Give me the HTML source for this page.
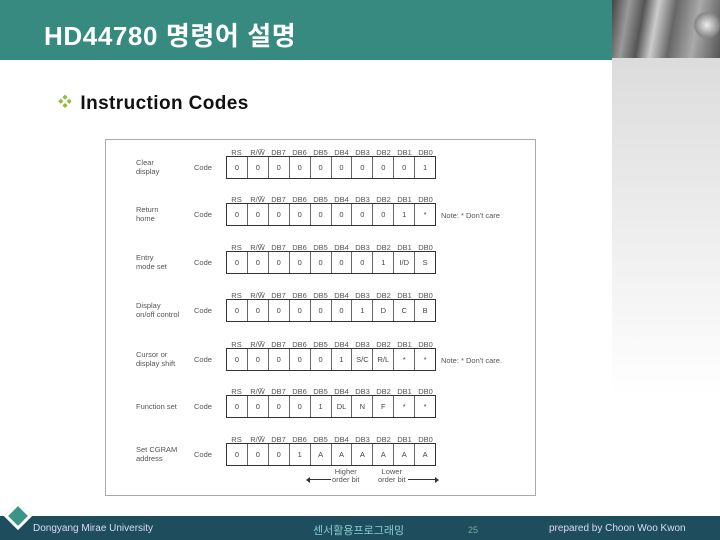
<!DOCTYPE html>
<html><head><meta charset="utf-8"><style>
*{margin:0;padding:0;box-sizing:border-box}
body{width:720px;height:540px;position:relative;overflow:hidden;background:#fff;font-family:"Liberation Sans","Noto Sans CJK KR",sans-serif}
.hdr{position:absolute;left:0;top:0;width:612px;height:60px;background:#368a80}
.hdr h1{position:absolute;left:44px;top:16px;color:#fff;font-size:26px;font-weight:bold;letter-spacing:0.6px}
.img{position:absolute;left:612px;top:0;width:108px;height:58px;background:radial-gradient(circle at 95px 25px,#eee 0,#888 12px,transparent 14px),linear-gradient(100deg,#444 0,#999 15%,#555 28%,#ccc 40%,#666 55%,#aaa 75%,#555 100%)}
.panel{position:absolute;left:612px;top:58px;width:108px;height:340px;background:linear-gradient(#dcdcdc,#fff)}
.sub{position:absolute;left:58px;top:93px;font-size:19px;font-weight:bold;color:#111;letter-spacing:0.4px}
.sub b{color:#8bbf3a;font-size:14px;margin-right:8px;position:relative;top:-2px}
.fig{position:absolute;left:105px;top:139px;width:431px;height:357px;border:1px solid #aaa;background:#fff}
.row{position:absolute;left:0;width:100%;font-size:7.5px;color:#555}
.h{position:absolute;left:120px;top:0;width:210px;display:flex}
.h span{flex:1;text-align:center}
.box{position:absolute;left:120px;top:8px;width:210px;height:23px;border:1px solid #333;display:flex}
.box span{flex:1;text-align:center;line-height:21px;border-left:1px solid #666;font-size:7.5px;color:#444}
.box span:first-child{border-left:none}
.lab{position:absolute;left:30px;top:10px;line-height:9px}
.code{position:absolute;left:88px;top:15px}
.note{position:absolute;left:335px;top:16px}
.ft{position:absolute;left:0;top:516px;width:720px;height:24px;background:#1e4d5e;color:#dde;font-size:10px}
.ft span{position:absolute;top:7px}
.dia{position:absolute;left:8px;top:506px;width:20px;height:20px;transform:rotate(45deg);background:#3a9588;border:3px solid #fff}
</style></head><body>
<div class="hdr"><h1>HD44780 명령어 설명</h1></div>
<div class="img"></div>
<div class="panel"></div>
<div class="sub"><b>❖</b>Instruction Codes</div>
<div class="fig">
<div class="row" style="top:8px"><div class="h"><span>RS</span><span>R/W̅</span><span>DB7</span><span>DB6</span><span>DB5</span><span>DB4</span><span>DB3</span><span>DB2</span><span>DB1</span><span>DB0</span></div><div class="lab">Clear<br>display</div><div class="code">Code</div><div class="box"><span>0</span><span>0</span><span>0</span><span>0</span><span>0</span><span>0</span><span>0</span><span>0</span><span>0</span><span>1</span></div></div>
<div class="row" style="top:55px"><div class="h"><span>RS</span><span>R/W̅</span><span>DB7</span><span>DB6</span><span>DB5</span><span>DB4</span><span>DB3</span><span>DB2</span><span>DB1</span><span>DB0</span></div><div class="lab">Return<br>home</div><div class="code">Code</div><div class="box"><span>0</span><span>0</span><span>0</span><span>0</span><span>0</span><span>0</span><span>0</span><span>0</span><span>1</span><span>*</span></div><div class="note">Note: * Don't care</div></div>
<div class="row" style="top:103px"><div class="h"><span>RS</span><span>R/W̅</span><span>DB7</span><span>DB6</span><span>DB5</span><span>DB4</span><span>DB3</span><span>DB2</span><span>DB1</span><span>DB0</span></div><div class="lab">Entry<br>mode set</div><div class="code">Code</div><div class="box"><span>0</span><span>0</span><span>0</span><span>0</span><span>0</span><span>0</span><span>0</span><span>1</span><span>I/D</span><span>S</span></div></div>
<div class="row" style="top:151px"><div class="h"><span>RS</span><span>R/W̅</span><span>DB7</span><span>DB6</span><span>DB5</span><span>DB4</span><span>DB3</span><span>DB2</span><span>DB1</span><span>DB0</span></div><div class="lab">Display<br>on/off control</div><div class="code">Code</div><div class="box"><span>0</span><span>0</span><span>0</span><span>0</span><span>0</span><span>0</span><span>1</span><span>D</span><span>C</span><span>B</span></div></div>
<div class="row" style="top:200px"><div class="h"><span>RS</span><span>R/W̅</span><span>DB7</span><span>DB6</span><span>DB5</span><span>DB4</span><span>DB3</span><span>DB2</span><span>DB1</span><span>DB0</span></div><div class="lab">Cursor or<br>display shift</div><div class="code">Code</div><div class="box"><span>0</span><span>0</span><span>0</span><span>0</span><span>0</span><span>1</span><span>S/C</span><span>R/L</span><span>*</span><span>*</span></div><div class="note">Note: * Don't care.</div></div>
<div class="row" style="top:247px"><div class="h"><span>RS</span><span>R/W̅</span><span>DB7</span><span>DB6</span><span>DB5</span><span>DB4</span><span>DB3</span><span>DB2</span><span>DB1</span><span>DB0</span></div><div class="lab" style="top:15px">Function set</div><div class="code">Code</div><div class="box"><span>0</span><span>0</span><span>0</span><span>0</span><span>1</span><span>DL</span><span>N</span><span>F</span><span>*</span><span>*</span></div></div>
<div class="row" style="top:295px"><div class="h"><span>RS</span><span>R/W̅</span><span>DB7</span><span>DB6</span><span>DB5</span><span>DB4</span><span>DB3</span><span>DB2</span><span>DB1</span><span>DB0</span></div><div class="lab">Set CGRAM<br>address</div><div class="code">Code</div><div class="box"><span>0</span><span>0</span><span>0</span><span>1</span><span>A</span><span>A</span><span>A</span><span>A</span><span>A</span><span>A</span></div>
<div style="position:absolute;left:226px;top:33px;line-height:8px;text-align:center">Higher<br>order bit</div>
<div style="position:absolute;left:272px;top:33px;line-height:8px;text-align:center">Lower<br>order bit</div>
<div style="position:absolute;left:203px;top:44px;width:22px;border-top:1px solid #333"></div>
<div style="position:absolute;left:200px;top:42px;border:3px solid transparent;border-right:4px solid #333;border-left:none"></div>
<div style="position:absolute;left:302px;top:44px;width:28px;border-top:1px solid #333"></div>
<div style="position:absolute;left:329px;top:42px;border:3px solid transparent;border-left:4px solid #333;border-right:none"></div>
</div>
</div>
<div class="ft"><span style="left:33px">Dongyang Mirae University</span><span style="left:313px;color:#8cc;font-size:11px;top:6px">센서활용프로그래밍</span><span style="left:468px;color:#7a9;font-size:9px;top:9px">25</span><span style="left:549px">prepared by Choon Woo Kwon</span></div>
<div class="dia"></div>
</body></html>
